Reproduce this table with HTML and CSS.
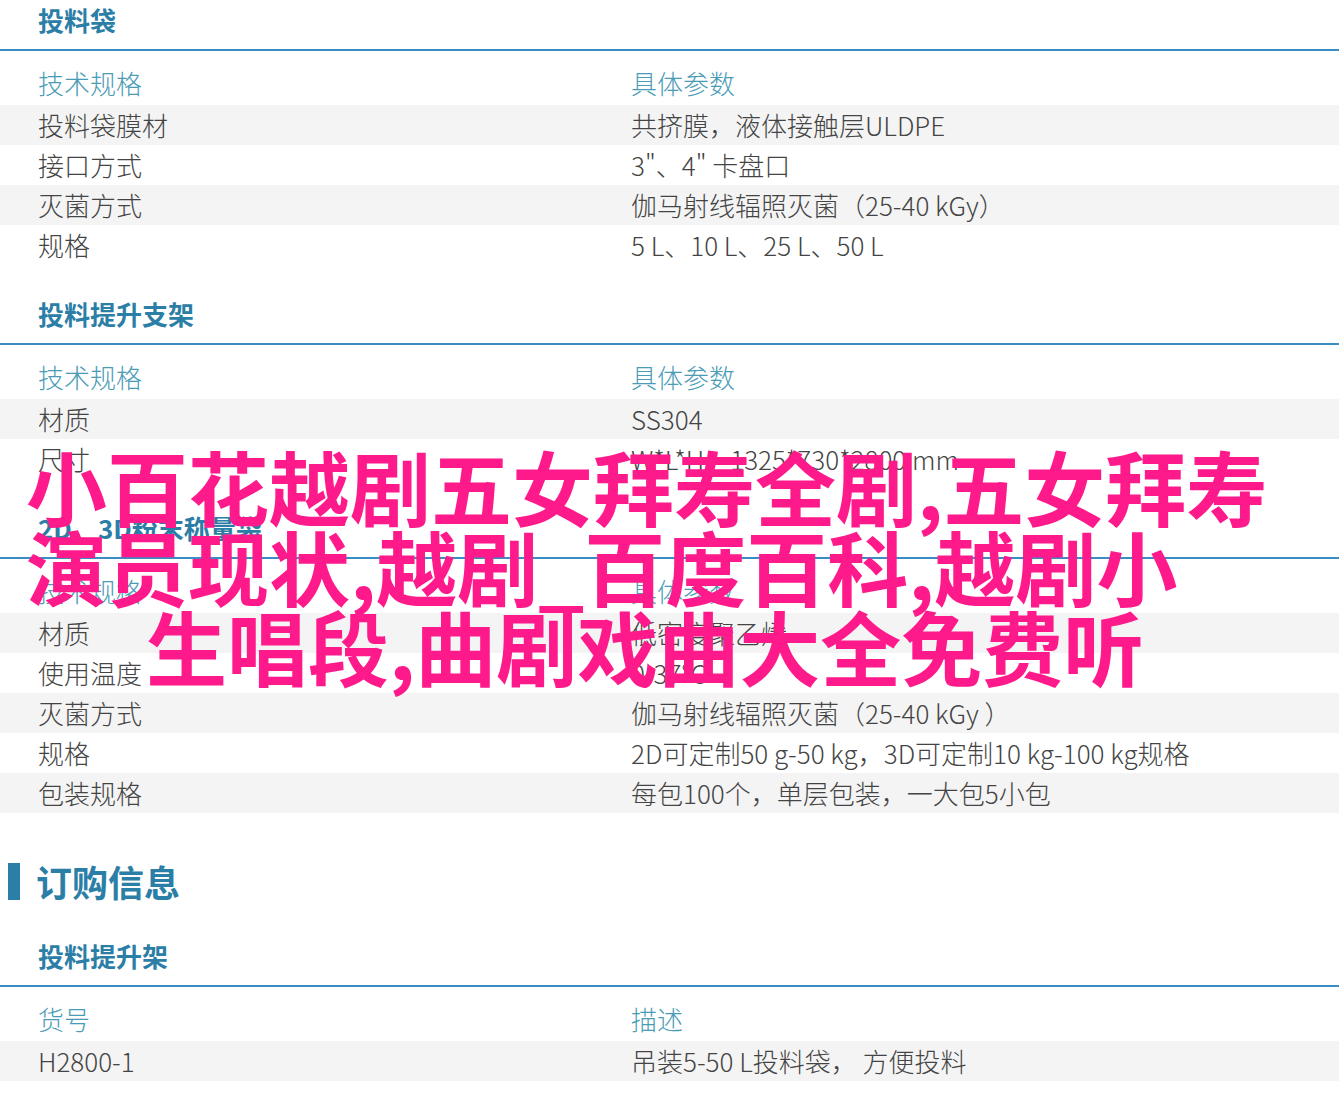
FILE: index.html
```html
<!DOCTYPE html>
<html lang="zh-CN">
  <head>
    <meta charset="UTF-8" />
    <meta name="viewport" content="width=device-width, initial-scale=1.0" />
    <title>投料袋 - 技术规格</title>
    <link rel="stylesheet" href="styles.css">
  </head>
  <body>
    <div class="page">
      <section class="spec">
        <h3 class="spec-title">投料袋</h3>
        <div class="spec-head">
          <span>技术规格</span>
          <span>具体参数</span>
        </div>
        <div class="spec-row"><span>投料袋膜材</span><span>共挤膜，液体接触层ULDPE</span></div>
        <div class="spec-row"><span>接口方式</span><span>3"、4" 卡盘口</span></div>
        <div class="spec-row"><span>灭菌方式</span><span>伽马射线辐照灭菌（25-40 kGy）</span></div>
        <div class="spec-row"><span>规格</span><span>5 L、10 L、25 L、50 L</span></div>
      </section>

      <section class="spec">
        <h3 class="spec-title">投料提升支架</h3>
        <div class="spec-head">
          <span>技术规格</span>
          <span>具体参数</span>
        </div>
        <div class="spec-row"><span>材质</span><span>SS304</span></div>
        <div class="spec-row"><span>尺寸</span><span>W*L*H：1325*730*2800 mm</span></div>
      </section>

      <section class="spec">
        <h3 class="spec-title">2D、3D粉末称量袋</h3>
        <div class="spec-head">
          <span>技术规格</span>
          <span>具体参数</span>
        </div>
        <div class="spec-row"><span>材质</span><span>低密度聚乙烯</span></div>
        <div class="spec-row"><span>使用温度</span><span>0-37°C</span></div>
        <div class="spec-row"><span>灭菌方式</span><span>伽马射线辐照灭菌（25-40 kGy ）</span></div>
        <div class="spec-row"><span>规格</span><span>2D可定制50 g-50 kg，3D可定制10 kg-100 kg规格</span></div>
        <div class="spec-row"><span>包装规格</span><span>每包100个，单层包装，一大包5小包</span></div>
      </section>

      <h2 class="block-title">订购信息</h2>

      <section class="spec">
        <h3 class="spec-title">投料提升架</h3>
        <div class="spec-head">
          <span>货号</span>
          <span>描述</span>
        </div>
        <div class="spec-row"><span>H2800-1</span><span>吊装5-50 L投料袋， 方便投料</span></div>
      </section>

      <div class="banner">
        <span class="banner-line">小百花越剧五女拜寿全剧,五女拜寿</span>
        <span class="banner-line">演员现状,越剧_百度百科,越剧小</span>
        <span class="banner-line banner-line-last">生唱段,曲剧戏曲大全免费听</span>
      </div>
    </div>
  </body>
</html>
```

FILE: styles.css
```css
body {
  margin: 0;
  padding: 0;
  background: #fff;
  color: #444;
  font-family: "Noto Sans CJK SC", "Noto Sans", sans-serif;
  font-weight: 300;
}
.page {
  position: relative;
  min-height: 1113px;
}
.spec {
  margin-bottom: 29px;
}
.spec-title {
  margin: 0;
  padding: 0 0 9px 38px;
  font-size: 26px;
  line-height: 40px;
  font-weight: 700;
  color: #2b7ea6;
  border-bottom: 2px solid #3a8dc2;
}
.spec-head,
.spec-row {
  display: grid;
  grid-template-columns: 593px 1fr;
  padding-left: 38px;
  font-size: 26px;
  line-height: 40px;
}
.spec-head {
  padding-top: 12px;
  padding-bottom: 2px;
  color: #4a9cb6;
}
.spec-row {
  color: #444;
}
.spec-row:nth-of-type(even) {
  background: #f4f4f4;
}
.block-title {
  display: flex;
  align-items: center;
  gap: 16px;
  margin: 43px 0 30px 8px;
  height: 50px;
  font-size: 36px;
  font-weight: 700;
  color: #2b7ea6;
}
.block-title::before {
  content: "";
  width: 12px;
  height: 37px;
  background: #2b7ea6;
}
.banner {
  position: absolute;
  top: 445px;
  left: 0;
  right: 0;
  display: flex;
  flex-direction: column;
  font-size: 81px;
  line-height: 80px;
  font-weight: 700;
  color: #ff1a8c;
}
.banner-line {
  padding-left: 26px;
  white-space: nowrap;
}
.banner-line-last {
  padding-left: 146px;
}
```
